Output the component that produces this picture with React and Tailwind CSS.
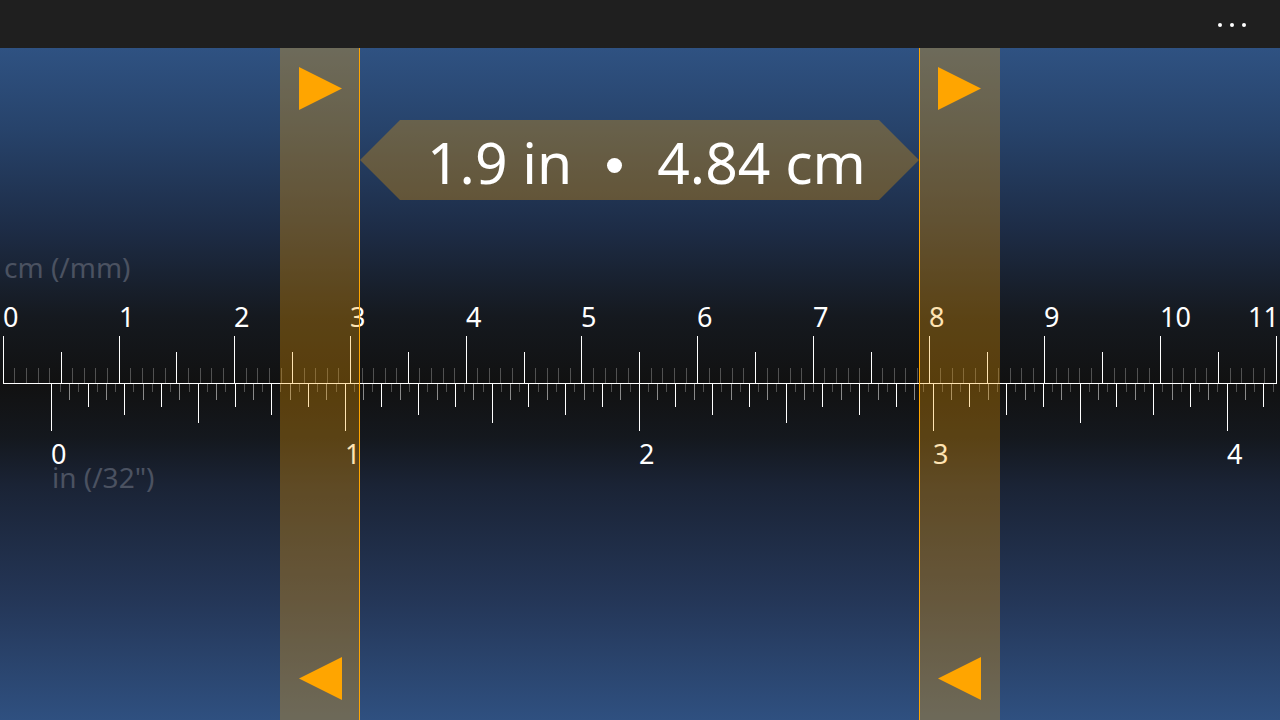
import React from 'react';

// ruler geometry, measured off the device screen
const PX_PER_CM = 115.73;
const PX_PER_IN = PX_PER_CM * 2.54;
const CM0 = 3.3;
const IN0 = 51.3;
const BASE = 335;

const snap = (x) => Math.floor(x) + 0.5;

const buildCmTicks = () => {
    const ticks = [];
    for (let i = 0; i <= 110; i++) {
        const x = snap(CM0 + (i * PX_PER_CM) / 10);
        let top = 320;
        let color = '#525252';
        if (i % 10 === 0) {
            top = 288;
            color = '#ffffff';
        } else if (i % 5 === 0) {
            top = 304;
            color = '#ffffff';
        }
        ticks.push({ x, top, color });
    }
    return ticks;
};

const buildInTicks = () => {
    const ticks = [];
    for (let j = 0; ; j++) {
        const raw = IN0 + (j * PX_PER_IN) / 32;
        if (raw > 1277) break;
        let bottom = 344;
        let color = '#505050';
        if (j % 32 === 0) {
            bottom = 383;
            color = '#ffffff';
        } else if (j % 16 === 0) {
            bottom = 375;
            color = '#ffffff';
        } else if (j % 8 === 0) {
            bottom = 367;
            color = '#ffffff';
        } else if (j % 4 === 0) {
            bottom = 359;
            color = '#ffffff';
        } else if (j % 2 === 0) {
            bottom = 352;
            color = '#8a8a8a';
        }
        ticks.push({ x: snap(raw), bottom, color });
    }
    return ticks;
};

const cmTicks = buildCmTicks();
const inTicks = buildInTicks();

const Ruler = () => (
    <svg width="1280" height="672" className="block font-['Noto_Sans',sans-serif]" shapeRendering="crispEdges">
        <text x="4" y="230" fill="#4b5261" className="text-[28px]">cm (/mm)</text>
        <text x="52" y="440" fill="#4b5261" className="text-[28px]">in (/32")</text>

        {Array.from({ length: 12 }, (_, i) => {
            const x = Math.floor(CM0 + i * PX_PER_CM);
            return i === 11 ? (
                <text key={i} x="1279" y="279" fill="#ffffff" textAnchor="end" className="text-[27px]">{i}</text>
            ) : (
                <text key={i} x={x} y="279" fill="#ffffff" className="text-[27px]">{i}</text>
            );
        })}
        {Array.from({ length: 5 }, (_, j) => (
            <text key={j} x={Math.floor(IN0 + j * PX_PER_IN)} y="416" fill="#ffffff" className="text-[27px]">{j}</text>
        ))}

        {cmTicks.map((t, i) => (
            <line key={'c' + i} x1={t.x} x2={t.x} y1={t.top} y2={BASE} stroke={t.color} strokeWidth="1" />
        ))}
        {inTicks.map((t, i) => (
            <line key={'i' + i} x1={t.x} x2={t.x} y1={BASE + 1} y2={t.bottom} stroke={t.color} strokeWidth="1" />
        ))}
        <line x1="3" x2="1277" y1={BASE + 0.5} y2={BASE + 0.5} stroke="#ffffff" strokeWidth="1" />
    </svg>
);

const ArrowRight = () => (
    <svg width="43" height="43" viewBox="0 0 43 43">
        <polygon points="0,0 43,21.5 0,43" fill="#ffa500" />
    </svg>
);

const ArrowLeft = () => (
    <svg width="43" height="43" viewBox="0 0 43 43">
        <polygon points="43,0 0,21.5 43,43" fill="#ffa500" />
    </svg>
);

const App = () => {
    return (
        <div className="w-[1280px] h-[720px] overflow-hidden bg-[#111] font-['Noto_Sans',sans-serif]">
            {/* app bar */}
            <div className="h-[48px] bg-[#1f1f1f] flex items-center justify-end gap-[8px] pr-[34px] pt-[2px]">
                <div className="w-[4px] h-[4px] rounded-full bg-white"></div>
                <div className="w-[4px] h-[4px] rounded-full bg-white"></div>
                <div className="w-[4px] h-[4px] rounded-full bg-white"></div>
            </div>

            <div className="relative h-[672px] bg-[linear-gradient(to_bottom,#2f5282_0%,#27436b_12%,#1d2c46_27%,#15191f_40%,#111111_50%,#14181e_58%,#1a2335_65%,#243657_82%,#2f5080_100%)]">
                <Ruler />

                {/* left caliper */}
                <div className="absolute top-0 left-[280px] w-[80px] h-full bg-[rgba(255,165,0,0.3)] border-r border-[#ffa500] flex flex-col justify-between pt-[19px] pb-[20px] pl-[19px]">
                    <ArrowRight />
                    <ArrowLeft />
                </div>

                {/* right caliper */}
                <div className="absolute top-0 left-[919px] w-[81px] h-full bg-[rgba(255,165,0,0.3)] border-l border-[#ffa500] flex flex-col justify-between pt-[19px] pb-[20px] pl-[18px]">
                    <ArrowRight />
                    <ArrowLeft />
                </div>

                {/* measurement readout */}
                <div className="absolute left-[360px] top-[72px] w-[559px] h-[80px] bg-[rgba(255,165,0,0.3)] [clip-path:polygon(40px_0,519px_0,559px_50%,519px_100%,40px_100%,0_50%)] flex items-start pl-[67px] gap-[35px] text-white">
                    <span className="text-[57px] leading-none mt-[14px] whitespace-nowrap">1.9 in</span>
                    <div className="w-[15px] h-[15px] rounded-full bg-white mt-[38px] shrink-0"></div>
                    <span className="text-[57px] leading-none mt-[14px] whitespace-nowrap">4.84 cm</span>
                </div>
            </div>
        </div>
    );
};

export default App;
